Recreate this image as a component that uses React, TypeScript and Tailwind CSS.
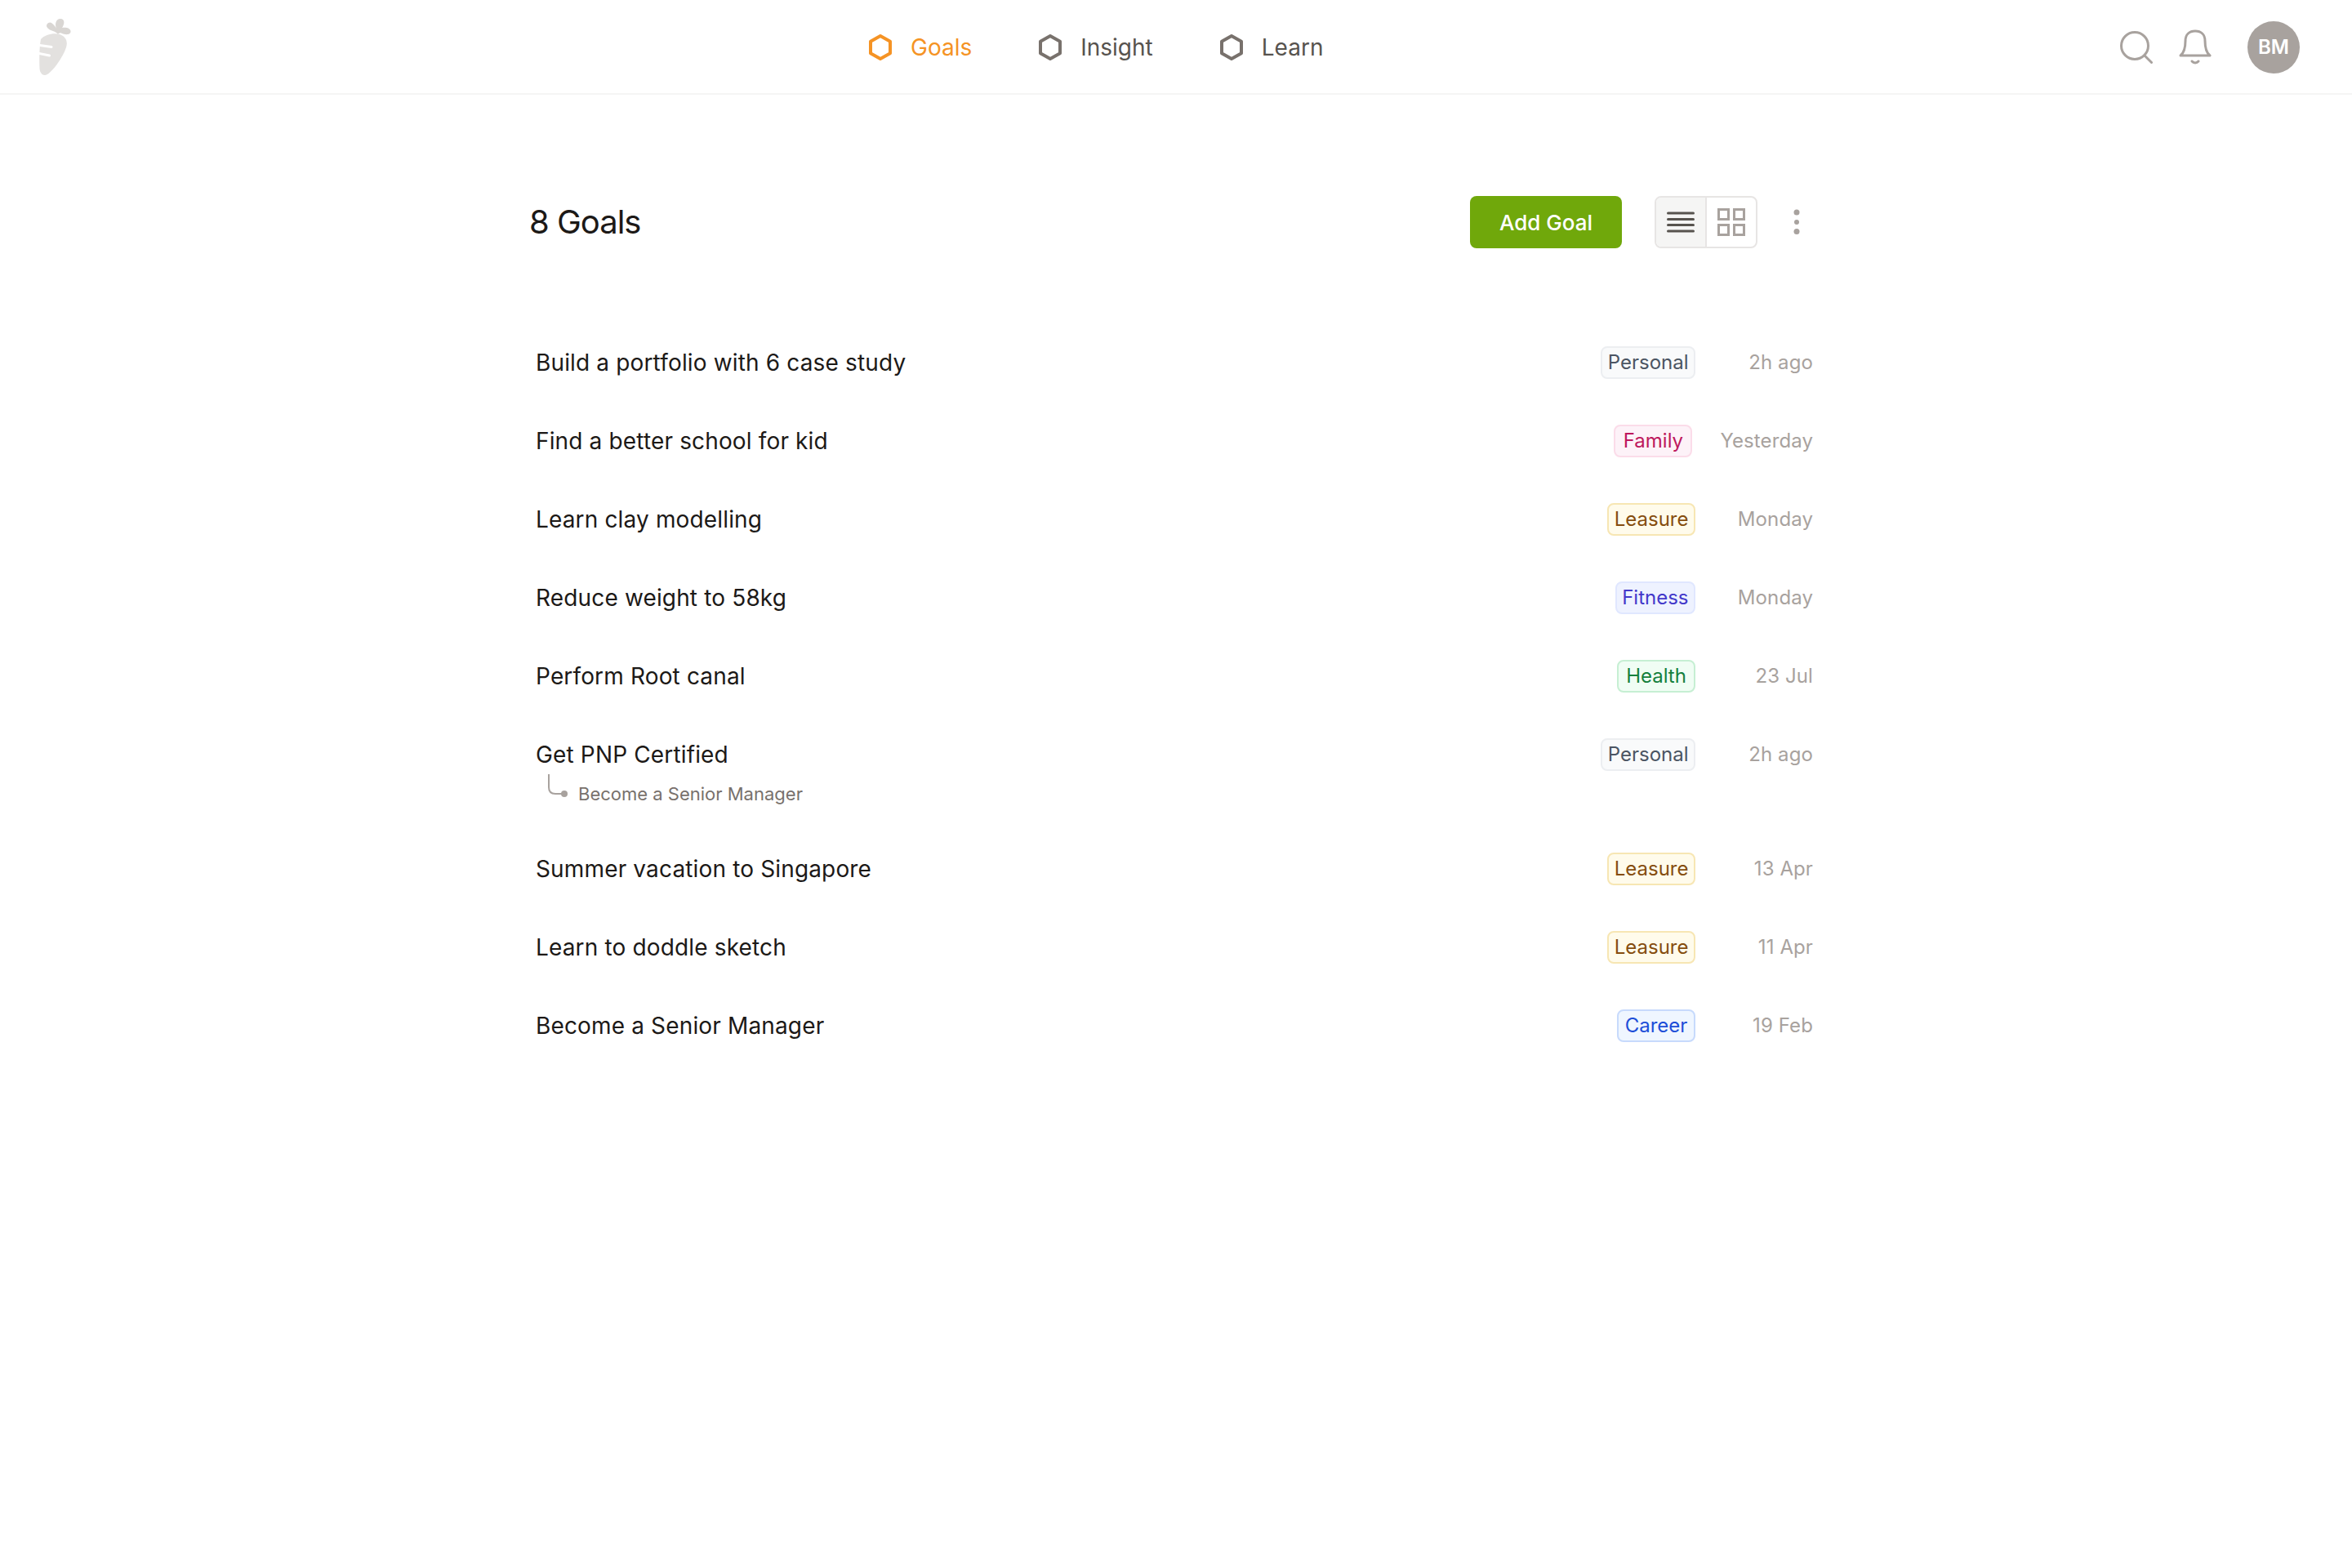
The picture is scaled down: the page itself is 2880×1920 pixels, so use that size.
const tagStyles: Record<string, string> = {
  Personal: "bg-[#f9fafb] border-[#eceef1] text-[#4b5563]",
  Family: "bg-[#fdf2f8] border-[#fbdce9] text-[#be185d]",
  Leasure: "bg-[#fffbeb] border-[#f7e6b3] text-[#854d0e]",
  Fitness: "bg-[#eef2ff] border-[#e0e7ff] text-[#4338ca]",
  Health: "bg-[#f0fdf4] border-[#c6efd3] text-[#15803d]",
  Career: "bg-[#eff6ff] border-[#c7dafc] text-[#1d4ed8]",
};

const goals = [
  { title: "Build a portfolio with 6 case study", tag: "Personal", date: "2h ago" },
  { title: "Find a better school for kid", tag: "Family", date: "Yesterday" },
  { title: "Learn clay modelling", tag: "Leasure", date: "Monday" },
  { title: "Reduce weight to 58kg", tag: "Fitness", date: "Monday" },
  { title: "Perform Root canal", tag: "Health", date: "23 Jul" },
  { title: "Get PNP Certified", tag: "Personal", date: "2h ago", parent: "Become a Senior Manager" },
  { title: "Summer vacation to Singapore", tag: "Leasure", date: "13 Apr" },
  { title: "Learn to doddle sketch", tag: "Leasure", date: "11 Apr" },
  { title: "Become a Senior Manager", tag: "Career", date: "19 Feb" },
];

function Hex({ color }: { color: string }) {
  return (
    <svg width="28" height="32" viewBox="0 0 28 32" fill="none">
      <path d="M14 2 L26 8.8 V23.2 L14 30 L2 23.2 V8.8 Z" stroke={color} strokeWidth="4" strokeLinejoin="round" />
    </svg>
  );
}

function Logo() {
  return (
    <svg width="40" height="72" viewBox="48 23 40 72" fill="none">
      <path d="M50 49 C55 43 66 41 73 43 C79 45 83 50 81.5 57 C79 68 66 87 58 92 C53 95 49 91 48.5 85 C48 74 48 60 50 49 Z" fill="#e3e1df" />
      <path d="M49 56.5 L63 58.5" stroke="#fff" strokeWidth="3" strokeLinecap="round" />
      <path d="M48 66.5 L60.5 69" stroke="#fff" strokeWidth="3" strokeLinecap="round" />
      <path d="M71 43 C69 39 61 39 58 35 C55 31 60 27 63 29 C66 31 68 34 69 36 C67 31 68 24 74 24 C80 24 79 31 76 35 C80 34 86 35 86.5 39 C87 44 80 44 75 41.5 C73 41 72 42 71 43 Z" fill="#d9d6d3" />
    </svg>
  );
}

export default function App() {
  return (
    <div className="w-[2880px] h-[1920px] bg-white font-['Inter',sans-serif] text-[#1c1917]">
      <header className="h-[116px] pt-[2px] border-b-2 border-[#f5f5f4] flex items-center pl-[48px] pr-[64px]">
        <Logo />
        <nav className="ml-[976px] flex items-center gap-[82px] text-[28px] text-[#57534e]">
          <a className="flex items-center gap-[23px] text-[#f59324]">
            <Hex color="#f59324" />
            Goals
          </a>
          <a className="flex items-center gap-[23px]">
            <Hex color="#78716c" />
            Insight
          </a>
          <a className="flex items-center gap-[23px]">
            <Hex color="#78716c" />
            Learn
          </a>
        </nav>
        <div className="ml-auto flex items-center">
          <svg width="40" height="40" viewBox="0 0 40 40" fill="none" stroke="#a8a29e" strokeWidth="3" strokeLinecap="round">
            <circle cx="18" cy="18" r="16.5" />
            <path d="M30 30 L38.5 38.5" />
          </svg>
          <svg className="ml-[32px]" width="40" height="44" viewBox="0 0 40 44" fill="none" stroke="#a8a29e" strokeWidth="3" strokeLinecap="round" strokeLinejoin="round">
            <path d="M2 32 C7 28 8 22 8 14 C8 6 13 2 20 2 C27 2 32 6 32 14 C32 22 33 28 38 32 Z" />
            <path d="M16 39 C18 41.5 22 41.5 24 39" />
          </svg>
          <div className="ml-[44px] w-[64px] h-[64px] rounded-full bg-[#a8a29e] text-white text-[24px] font-semibold flex items-center justify-center">
            BM
          </div>
        </div>
      </header>

      <main className="w-[1584px] ml-[648px]">
        <div className="mt-[124px] flex items-center h-[64px] pr-[28px]">
          <h1 className="text-[40px] leading-[64px] font-normal tracking-[-0.025em]">8 Goals</h1>
          <button className="ml-auto w-[186px] h-[64px] rounded-[8px] bg-[#70a80b] text-white text-[26px] font-medium">
            Add Goal
          </button>
          <div className="ml-[40px] w-[126px] h-[64px] rounded-[8px] border-2 border-[#e7e5e4] flex overflow-hidden">
            <div className="w-[62px] border-r-2 border-[#e7e5e4] bg-[#f5f5f4] flex items-center justify-center">
              <svg width="34" height="26" viewBox="0 0 34 26" stroke="#57534e" strokeWidth="3" strokeLinecap="round">
                <path d="M1.5 2 H32.5 M1.5 9.5 H32.5 M1.5 16.5 H32.5 M1.5 24 H32.5" />
              </svg>
            </div>
            <div className="flex-1 flex items-center justify-center">
              <svg width="34" height="34" viewBox="0 0 34 34" fill="none" stroke="#a8a29e" strokeWidth="3">
                <rect x="1.5" y="1.5" width="12" height="12" />
                <rect x="20.5" y="1.5" width="12" height="12" />
                <rect x="1.5" y="20.5" width="12" height="12" />
                <rect x="20.5" y="20.5" width="12" height="12" />
              </svg>
            </div>
          </div>
          <svg className="ml-[44px]" width="8" height="32" viewBox="0 0 8 32" fill="#a8a29e">
            <circle cx="4" cy="4" r="3.5" />
            <circle cx="4" cy="16" r="3" />
            <circle cx="4" cy="27.5" r="3.5" />
          </svg>
        </div>

        <ul className="mt-[92px] pl-[8px] pr-[12px]">
          {goals.map((g) => (
            <li key={g.title + g.date} className="flex items-start py-[28px]">
              <div className="flex-1">
                <div className="text-[28px] leading-[40px] tracking-[0.15px]">{g.title}</div>
                {g.parent && (
                  <div className="relative mt-[10px] h-[34px] pl-[52px] text-[22px] leading-[36px] text-[#78716c]">
                    <svg className="absolute left-[14px] top-[-6px]" width="26" height="32" viewBox="0 0 26 32" fill="none" stroke="#a8a29e" strokeWidth="2">
                      <path d="M2 0 V16 C2 21 5 24 10 24 H20" />
                      <circle cx="21" cy="24" r="4" fill="#a8a29e" stroke="none" />
                    </svg>
                    {g.parent}
                  </div>
                )}
              </div>
              <span className={`h-[40px] min-w-[96px] text-center rounded-[8px] border-2 px-[6.5px] text-[24px] leading-[36px] ${tagStyles[g.tag]}`}>
                {g.tag}
              </span>
              <span className="ml-[34px] min-w-[110px] text-right text-[24px] leading-[40px] tracking-[0.1px] text-[#a8a29e]">{g.date}</span>
            </li>
          ))}
        </ul>
      </main>
    </div>
  );
}
